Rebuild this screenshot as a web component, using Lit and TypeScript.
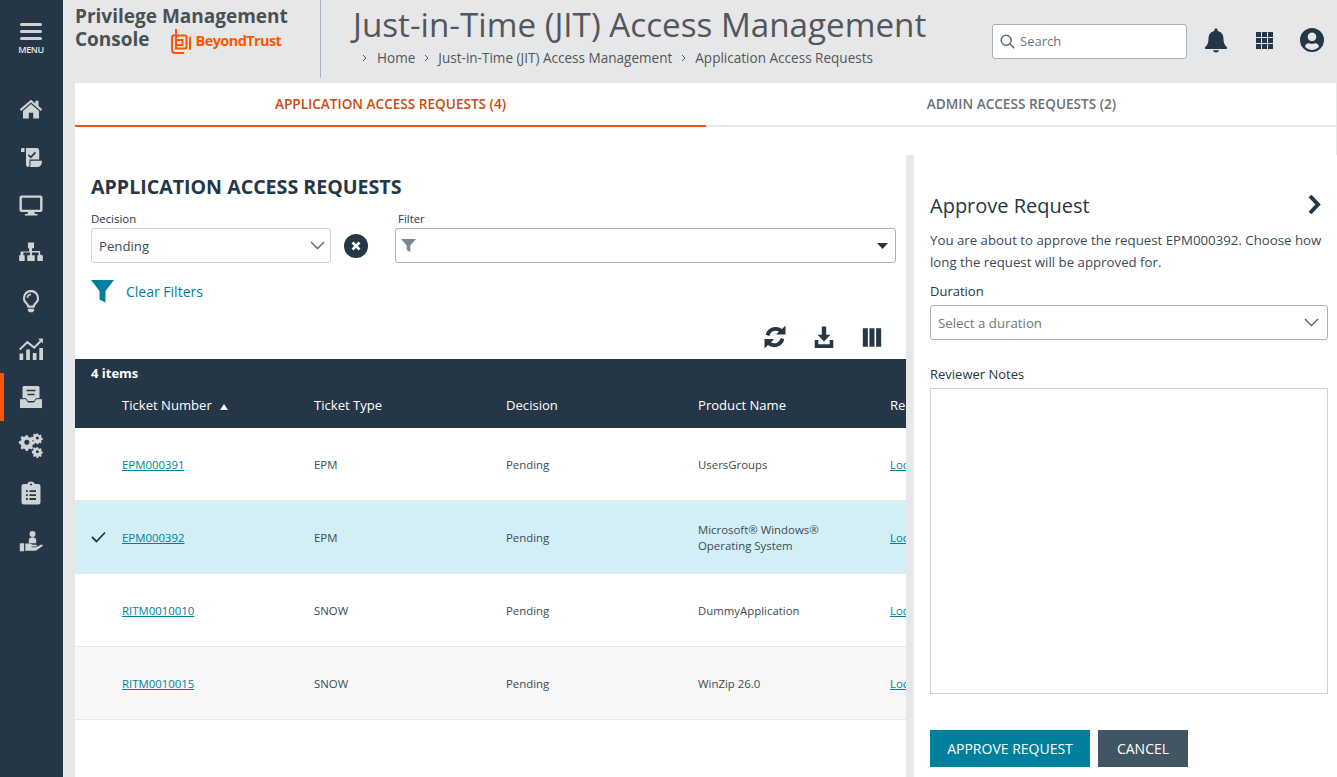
import { LitElement, html, css, svg } from "lit";
import { customElement } from "lit/decorators.js";

const navIcons = [
  svg`<path d="M12 2.700 .8 12.300l1.400 1.600L12 5.500l9.800 8.400 1.400-1.600-3.700-3.200V3.700h-3.200v2.800Z"/><path d="M12 7.100 4 13.900v7.600h5.800v-5.800h4.400v5.800H20v-7.600Z"/>`,
  svg`<path d="M2 4.600C2 3.400 3 3 4 3h1.500v4H2Z"/><path d="M6.800 3H18a2.400 2.400 0 0 1 2.200 2.400V14.500H10.500v5.800c0 1.200-.8 1.700-1.600 1.700S7 21 7 19.800V4.600ZM11.500 15.800H23c0 3.500-1.600 6.200-4.400 6.200H10.800c.5-.6.700-1.300.7-2.200Z"/><path d="m9.400 9.900 2.400 2.400 4.600-5" fill="none" stroke="#253746" stroke-width="1.700"/>`,
  svg`<path fill-rule="evenodd" d="M2.500 2.400h19A2 2 0 0 1 23.500 4.400v12.600a2 2 0 0 1-2 2h-6.200l.6 2h2.600v1.600H5.900v-1.600h2.600l.6-2H2.500a2 2 0 0 1-2-2V4.400a2 2 0 0 1 2-2Zm.4 2.300v12h18.200v-12Z"/>`,
  svg`<path d="M8.800 1.500h6.400v6H13v3h8.600v4H23v.5h1.500v6h-5.800v-6H20v-2.900H13v2.900h2.900v6H8.100v-6H11v-2.900H4v2.900h1.300v6H-.5v-6H1v-.5l0-.5V11h9V7.500H8.800Z" transform="translate(.6 0) scale(.95)"/>`,
  svg`<path fill-rule="evenodd" d="M12 1a8 8 0 0 0-5.700 13.600c1.200 1.300 2 2.700 2.300 4.100h6.800c.3-1.400 1.100-2.800 2.300-4.100A8 8 0 0 0 12 1Zm0 2.200a5.800 5.800 0 0 1 4.200 9.900c-1 1-1.900 2.200-2.400 3.400h-3.600c-.5-1.200-1.400-2.400-2.400-3.400A5.800 5.800 0 0 1 12 3.200Z"/><path d="M8.900 19.700h6.200v1.800l-1.300 1.700h-3.600l-1.300-1.700Z"/><path d="M12 4.700A4.500 4.500 0 0 0 7.600 9h1.600A2.900 2.900 0 0 1 12 6.300Z"/>`,
  svg`<path d="M.5 16.500h3.700V23H.5ZM7.200 12.500h3.700V23H7.200ZM13.800 16h3.700v7h-3.700ZM20.300 11h3.700v12h-3.700Z"/><path d="m.7 12.600 7.600-7.400 6.900 5.400L21.800 4" fill="none" stroke="#d0d3d4" stroke-width="2"/><path d="m24 1.500-.2 5-4.700-4.800Z"/>`,
  svg`<rect x="3.500" y="1" width="17" height="15" rx="1.500"/><path d="M7.500 5.500h9M8.500 9.500h7" stroke="#253746" stroke-width="1.600" fill="none"/><path d="M.5 23.500v-9.800h6.500l2 3.300h6l2-3.300h6.500v9.800Z" stroke="#253746" stroke-width="1"/>`,
  svg`<path fill-rule="evenodd" d="m8 5.800 2.400-.1.700 2.300 1.800.8 2.200-1.100 1.700 1.700-1 2.200.7 1.800 2.300.8v2.400l-2.300.8-.7 1.800 1 2.200-1.700 1.700-2.200-1.100-1.800.8-.7 2.300H8l-.8-2.300-1.800-.8-2.200 1.100-1.700-1.700 1.100-2.200-.8-1.800L-.5 15.600v-2.400l2.300-.8.800-1.800L1.500 8.400l1.700-1.700 2.200 1.100 1.800-.8Zm1.200 5.400a3.200 3.200 0 1 0 .01 0Z" transform="translate(.3 -2.500) scale(.82)"/><path fill-rule="evenodd" d="m18.300 .5 1.600 0 .4 1.300 1 .5 1.300-.6 1.100 1.100-.6 1.300.5 1 1.300.4v1.600l-1.300.4-.5 1 .6 1.300-1.100 1.100-1.300-.6-1 .5-.4 1.300h-1.600l-.4-1.300-1-.5-1.300.6-1.100-1.100.6-1.300-.5-1-1.300-.4V4.500l1.300-.4.5-1-.6-1.300 1.100-1.100 1.300.6 1-.5Zm.8 3.300a1.600 1.600 0 1 0 .01 0Z" transform="translate(.4 0) scale(.94)"/><path fill-rule="evenodd" d="m18.300 14 1.600 0 .4 1.300 1 .5 1.300-.6 1.100 1.100-.6 1.300.5 1 1.300.4v1.600l-1.300.4-.5 1 .6 1.300-1.100 1.100-1.300-.6-1 .5-.4 1.300h-1.600l-.4-1.300-1-.5-1.300.6-1.100-1.100.6-1.300-.5-1-1.300-.4V18l1.300-.4.500-1-.6-1.300 1.100-1.100 1.300.6 1-.5Zm.8 3.300a1.600 1.600 0 1 0 .01 0Z" transform="translate(.4 1) scale(.94)"/>`,
  svg`<path fill-rule="evenodd" d="M5 3h3.300c.3-1.300 1.600-2.500 3.700-2.500S15.400 1.700 15.700 3H19a2.500 2.500 0 0 1 2.500 2.500V21A2.500 2.500 0 0 1 19 23.500H5A2.500 2.500 0 0 1 2.500 21V5.500A2.500 2.500 0 0 1 5 3Zm2 6.300v1.800h1.800V9.300Zm3.500 0v1.800H17V9.300ZM7 13.200V15h1.800v-1.800Zm3.500 0V15H17v-1.800ZM7 17.100v1.800h1.800v-1.800Zm3.500 0v1.800H17v-1.800ZM11 2.800v1.400h2V2.800Z"/>`,
  svg`<circle cx="13.500" cy="5" r="3"/><path d="M9.800 14.200V11c0-1.700 1.500-2.700 3.700-2.700s3.700 1 3.700 2.700v3.200Z"/><path d="M.8 14.200h4.300v8H.8ZM6.300 14.600h4.500c.8 0 1.300.2 1.900.6l.9.600h3.500c1 0 1.300 1.600 0 1.800H12.600v.6h4.500l4.800-2.500c1.300-.6 2.500.6 1.400 1.600l-5.700 4c-.5.300-.9.500-1.500.5H6.300Z"/>`,
];

const chevron = svg`<path d="m1 1 6.500 6.500L14 1" fill="none" stroke="#53656f" stroke-width="1.400"/>`;

const columns = ["Ticket Number", "Ticket Type", "Decision", "Product Name", "Requestor"];

const rows = [
  { id: "EPM000391", type: "EPM", product: ["UsersGroups"], cls: "" },
  { id: "EPM000392", type: "EPM", product: ["Microsoft® Windows®", "Operating System"], cls: "selected" },
  { id: "RITM0010010", type: "SNOW", product: ["DummyApplication"], cls: "" },
  { id: "RITM0010015", type: "SNOW", product: ["WinZip 26.0"], cls: "alt" },
];

@customElement("app-root")
export class AppRoot extends LitElement {
  static styles = css`
    :host {
      display: flex;
      width: 100%;
      height: 777px;
      overflow: hidden;
      background: #e6e7e8;
      font-family: "Open Sans", "Liberation Sans", sans-serif;
      color: #253746;
    }
    * { box-sizing: border-box; }
    svg { display: block; flex: none; }

    .sidebar { width: 63px; flex: none; background: #253746; display: flex; flex-direction: column; align-items: stretch; color: #d0d3d4; }
    .menu { height: 85px; display: flex; flex-direction: column; align-items: center; padding: 23px 1px 0 0; }
    .bars { width: 22px; display: flex; flex-direction: column; gap: 4px; margin-bottom: 4px; }
    .bars i { display: block; height: 3px; border-radius: 2px; background: #d0d3d4; }
    .menu span { font-size: 9px; line-height: 11px; font-weight: 600; letter-spacing: -0.4px; color: #e6e7e8; }
    .nav { height: 48px; display: flex; align-items: center; justify-content: center; border-left: 4px solid transparent; padding-right: 5px; }
    .nav svg { width: 24px; height: 24px; fill: #d0d3d4; overflow: visible; }
    .nav.on { border-left-color: #ff5500; }

    .page { flex: 1; min-width: 0; display: flex; flex-direction: column; }
    .header { height: 83px; flex: none; display: flex; padding-left: 12px; }
    .brand { width: 246px; height: 78px; border-right: 1px solid #aab4c4; padding-top: 5px; flex: none; }
    .brand-line { height: 23px; font-size: 19px; line-height: 23px; font-weight: 700; color: #4a5056; display: flex; align-items: center; white-space: nowrap; }
    .logo { display: flex; align-items: center; margin: 2px 0 0 21px; gap: 5px; color: #ff5500; font-size: 14.5px; font-weight: 700; letter-spacing: -0.6px; }
    .titles { width: 671px; flex: none; padding-left: 32px; }
    h1 { margin: 0; font-size: 33.2px; line-height: 41px; font-weight: 400; color: #53565a; padding-top: 4px; white-space: nowrap; }
    .crumbs { display: flex; align-items: center; font-size: 13.55px; line-height: 18px; color: #53565a; padding-left: 9px; margin-top: 4px; white-space: nowrap; }
    .crumbs svg { width: 5px; height: 8px; margin-right: 9px; margin-left: 9px; }
    .crumbs svg:first-child { margin-left: 0; margin-right: 10px; }
    .tools { display: flex; align-items: center; height: 83px; }
    .search { width: 195px; height: 35px; background: #fff; border: 1px solid #a9b0b6; border-radius: 3px; display: flex; align-items: center; padding-left: 7px; gap: 5px; font-size: 13px; color: #6b7680; margin-right: 5px; margin-top: -1px; }
    .icon-btn { width: 48px; display: flex; justify-content: center; margin-top: -3px; }

    .content { flex: 1; min-height: 0; display: flex; flex-direction: column; margin-left: 12px; background: #fff; }
    .top { flex: none; border-right: 1px solid #e6e7e8; }
    .tabs { display: flex; height: 44px; }
    .tab { flex: none; width: 631px; display: flex; align-items: center; justify-content: center; font-size: 13.6px; font-weight: 600; color: #6a7077; border-bottom: 2px solid #e6e7e8; padding-bottom: 1px; }
    .tab.on { color: #c84a11; border-bottom-color: #e8590c; }
    .gap { height: 28px; }

    .split { flex: 1; min-height: 0; display: flex; }
    .main { width: 831px; flex: none; overflow: hidden; display: flex; flex-direction: column; }
    .divider { width: 8px; flex: none; background: #e6e7e8; }
    .pane { flex: 1; min-width: 0; padding: 36px 9px 0 16px; display: flex; flex-direction: column; }

    h2 { margin: 0; font-size: 19.6px; line-height: 27px; font-weight: 700; color: #253746; padding: 18px 0 0 16px; }
    .filters { display: flex; padding: 12px 10px 0 16px; align-items: flex-end; }
    .field-label { font-size: 11.4px; line-height: 14px; color: #253746; margin-bottom: 2px; }
    .filter .field-label { padding-left: 3px; }
    .select { height: 35px; border: 1px solid #d0d3d4; border-radius: 3px; display: flex; align-items: center; justify-content: space-between; padding: 0 5px 0 7px; font-size: 13.2px; color: #3c4a56; }
    .select svg { width: 15px; height: 9px; }
    .decision { width: 240px; }
    .clear { width: 24px; height: 24px; border-radius: 50%; background: #253746; margin: 0 27px 5px 13px; display: flex; align-items: center; justify-content: center; }
    .filter { flex: 1; }
    .filter .select { border-color: #a9b0b6; padding: 0 7px 0 5px; }
    .filter svg.fn { width: 15px; height: 15px; fill: #7b868e; }
    .filter svg.caret { width: 11px; height: 6px; fill: #253746; }
    .clear-row { display: flex; align-items: center; gap: 12px; padding: 14px 0 0 16px; font-size: 14px; color: #00809d; height: 43px; }
    .clear-row svg { width: 23px; height: 23px; fill: #00809d; }
    .actions { display: flex; justify-content: flex-end; height: 24px; gap: 25px; padding-right: 23px; margin-top: 19px; align-items: center; }
    .actions svg { width: 24px; height: 24px; fill: #253746; overflow: visible; }
    .actions svg.cols-ic { width: 22px; height: 22px; }

    .table-head { margin-top: 10px; height: 69px; flex: none; background: #253746; color: #fff; }
    .count { font-size: 13px; line-height: 16px; font-weight: 700; padding: 6px 0 0 16px; height: 23px; }
    .cols { display: flex; padding-left: 47px; margin-top: 14px; font-size: 13.1px; line-height: 18px; white-space: nowrap; }
    .cols > div, .row > div { width: 192px; flex: none; }
    .sort { display: inline-block; width: 0; height: 0; margin-left: 8px; border-left: 4.5px solid transparent; border-right: 4.5px solid transparent; border-bottom: 6px solid #fff; }
    .row { height: 73px; flex: none; display: flex; align-items: center; padding: 2px 0 0 47px; border-bottom: 1px solid #e6e7e8; font-size: 11.4px; line-height: 16px; color: #3c4a56; position: relative; white-space: nowrap; }
    .row.selected { background: #d2eff5; border-bottom-color: #d2eff5; }
    .row.alt { background: #f7f7f7; }
    .row a { color: #00809d; text-decoration: underline; }
    .check { position: absolute; left: 16px; top: 30px; width: 15px; height: 12px; }

    .pane-head { display: flex; justify-content: space-between; align-items: center; height: 30px; }
    h3 { margin: 0; font-size: 20px; line-height: 30px; font-weight: 400; color: #253746; }
    .pane-head svg { width: 15px; height: 21px; margin-right: 6px; margin-top: -4px; }
    p { margin: 8px 0 0; font-size: 13.25px; line-height: 22px; color: #3c4a56; }
    .lbl { font-size: 13px; line-height: 18px; color: #253746; }
    .lbl.duration { margin-top: 9px; }
    .lbl.notes-lbl { margin-top: 25px; }
    .dur { margin-top: 5px; height: 35px; border: 1px solid #a9b0b6; border-radius: 3px; display: flex; align-items: center; justify-content: space-between; padding: 0 8px 0 7px; font-size: 13.25px; color: #6b7680; }
    .dur svg { width: 15px; height: 9px; }
    .notes { height: 306px; border: 1px solid #d0d3d4; margin-top: 5px; }
    .btns { display: flex; gap: 8px; margin-top: 36px; }
    .btn { height: 37px; display: flex; align-items: center; justify-content: center; font-size: 14px; color: #fff; }
    .btn.a { width: 160px; background: #00809d; }
    .btn.b { width: 90px; background: #425563; }
  `;

  render() {
    return html`
      <aside class="sidebar">
        <div class="menu"><div class="bars"><i></i><i></i><i></i></div><span>MENU</span></div>
        ${navIcons.map((p, i) => html`<div class="nav ${i === 6 ? "on" : ""}"><svg viewBox="0 0 24 24">${p}</svg></div>`)}
      </aside>
      <div class="page">
        <header class="header">
          <div class="brand">
            <div class="brand-line">Privilege Management</div>
            <div class="brand-line">Console
              <div class="logo">
                <svg width="20" height="26" viewBox="0 0 20 26" fill="none" stroke="#ff5500" stroke-width="2"><path d="M5 1v6.500H2.500Q1 7.500 1 9v13q0 3 3 3h9"/><path d="M5 7.500h9q1.500 0 1.500 1.500v10q0 1.500-1.500 1.500H5V1"/><path d="M5 12h6.500v5H5"/><path d="M19 9.500v11.500" stroke-linecap="round"/></svg>
                <span>BeyondTrust</span>
              </div>
            </div>
          </div>
          <div class="titles">
            <h1>Just-in-Time (JIT) Access Management</h1>
            <div class="crumbs">
              ${["Home", "Just-in-Time (JIT) Access Management", "Application Access Requests"].map(
                (c) => html`<svg viewBox="0 0 5 8"><path d="m1 1 3 3-3 3" fill="none" stroke="#53565a"/></svg><span>${c}</span>`
              )}
            </div>
          </div>
          <div class="tools">
            <div class="search">
              <svg width="15" height="15" viewBox="0 0 15 15" fill="none" stroke="#5f6b76" stroke-width="1.500"><circle cx="6.200" cy="6.200" r="5"/><path d="m10 10 4.200 4.200"/></svg>
              <span>Search</span>
            </div>
            <div class="icon-btn"><svg width="24" height="25" viewBox="0 0 24 25" fill="#253746"><path d="M12 .5c-1 0-1.700.7-1.700 1.700v.8C6.500 3.900 4.500 6.800 4.500 10.500c0 5-1.500 6.900-3.400 8.700-.7.700-.2 1.800.8 1.800h20.200c1 0 1.500-1.100.8-1.800-1.900-1.800-3.400-3.700-3.400-8.700 0-3.700-2-6.600-5.800-7.500v-.8C13.700 1.200 13 .5 12 .5ZM9.200 22.200c0 1.300 1.300 2.300 2.800 2.300s2.800-1 2.800-2.300Z"/></svg></div>
            <div class="icon-btn"><svg width="17" height="17" viewBox="0 0 17 17" fill="#253746"><path d="M0 0h5v5H0ZM6 0h5v5H6ZM12 0h5v5h-5ZM0 6h5v5H0ZM6 6h5v5H6ZM12 6h5v5h-5ZM0 12h5v5H0ZM6 12h5v5H6ZM12 12h5v5h-5Z"/></svg></div>
            <div class="icon-btn"><svg width="24" height="24" viewBox="0 0 24 24" fill="#253746"><path fill-rule="evenodd" d="M12 0a12 12 0 1 1 0 24 12 12 0 0 1 0-24Zm0 4.500a4.300 4.300 0 1 0 .01 0ZM5 18.800a9.400 9.400 0 0 0 14 0c-.3-2.200-1.800-3.500-3.600-3.500-1 0-1.800.6-3.400.6s-2.400-.6-3.400-.6c-1.800 0-3.300 1.300-3.600 3.500Z"/></svg></div>
          </div>
        </header>

        <div class="content">
          <div class="top">
            <div class="tabs">
              <div class="tab on">APPLICATION ACCESS REQUESTS (4)</div>
              <div class="tab">ADMIN ACCESS REQUESTS (2)</div>
            </div>
            <div class="gap"></div>
          </div>
          <div class="split">
            <section class="main">
              <h2>APPLICATION ACCESS REQUESTS</h2>
              <div class="filters">
                <div class="decision">
                  <div class="field-label">Decision</div>
                  <div class="select"><span>Pending</span><svg viewBox="0 0 15 9">${chevron}</svg></div>
                </div>
                <div class="clear"><svg width="10" height="10" viewBox="0 0 10 10"><path d="m1.500 1.500 7 7m0-7-7 7" stroke="#fff" stroke-width="2.600"/></svg></div>
                <div class="filter">
                  <div class="field-label">Filter</div>
                  <div class="select">
                    <svg class="fn" viewBox="0 0 15 15"><path d="M0 1h15L9.300 7.500V14l-3.600-2V7.500Z"/></svg>
                    <svg class="caret" viewBox="0 0 11 6"><path d="M0 0h11L5.500 6Z"/></svg>
                  </div>
                </div>
              </div>
              <div class="clear-row">
                <svg viewBox="0 0 23 23"><path d="M0 0h23L14.500 11v11.500l-6-3V11Z"/></svg>
                <span>Clear Filters</span>
              </div>
              <div class="actions">
                <svg viewBox="0 0 24 24"><path d="M12.500 2c-4.800 0-8.800 3.300-9.800 7.800L6.400 11a6.200 6.200 0 0 1 9.500-4.300L13 9.500h9.500V.5L19 3.900A10 10 0 0 0 12.500 2ZM1.500 14v9.500L5 20.100a10.300 10.300 0 0 0 16.300-5.900L17.600 13a6.200 6.200 0 0 1-9.500 4.300l2.900-3.300Z"/></svg>
                <svg viewBox="0 0 24 24"><path d="M9.800 1.500h4.400v8.300h4.300L12 16.500 5.500 9.800h4.300Z"/><path d="M2.700 15h3.600v4.200h11.400V15h3.600v8H2.700Z"/></svg>
                <svg class="cols-ic" viewBox="0 0 24 24"><path d="M2 2.500h5.500v20H2ZM9.200 2.500h5.500v20H9.200ZM16.500 2.500H22v20h-5.500Z"/></svg>
              </div>
              <div class="table-head">
                <div class="count">4 items</div>
                <div class="cols">
                  ${columns.map((c, i) => html`<div>${c}${i === 0 ? html`<i class="sort"></i>` : ""}</div>`)}
                </div>
              </div>
              ${rows.map(
                (r) => html`<div class="row ${r.cls}">
                  ${r.cls === "selected"
                    ? html`<svg class="check" viewBox="0 0 15 12"><path d="m1 6 4.500 4.500L14 1.500" fill="none" stroke="#253746" stroke-width="1.800"/></svg>`
                    : ""}
                  <div><a>${r.id}</a></div>
                  <div>${r.type}</div>
                  <div>Pending</div>
                  <div>${r.product.map((l) => html`${l}<br />`)}</div>
                  <div><a>Local</a></div>
                </div>`
              )}
            </section>
            <div class="divider"></div>
            <aside class="pane">
              <div class="pane-head">
                <h3>Approve Request</h3>
                <svg viewBox="0 0 15 21"><path d="m3 2 8 8.500-8 8.500" fill="none" stroke="#253746" stroke-width="4"/></svg>
              </div>
              <p>You are about to approve the request EPM000392. Choose how long the request will be approved for.</p>
              <div class="lbl duration">Duration</div>
              <div class="dur"><span>Select a duration</span><svg viewBox="0 0 15 9">${chevron}</svg></div>
              <div class="lbl notes-lbl">Reviewer Notes</div>
              <div class="notes"></div>
              <div class="btns"><div class="btn a">APPROVE REQUEST</div><div class="btn b">CANCEL</div></div>
            </aside>
          </div>
        </div>
      </div>
    `;
  }
}
